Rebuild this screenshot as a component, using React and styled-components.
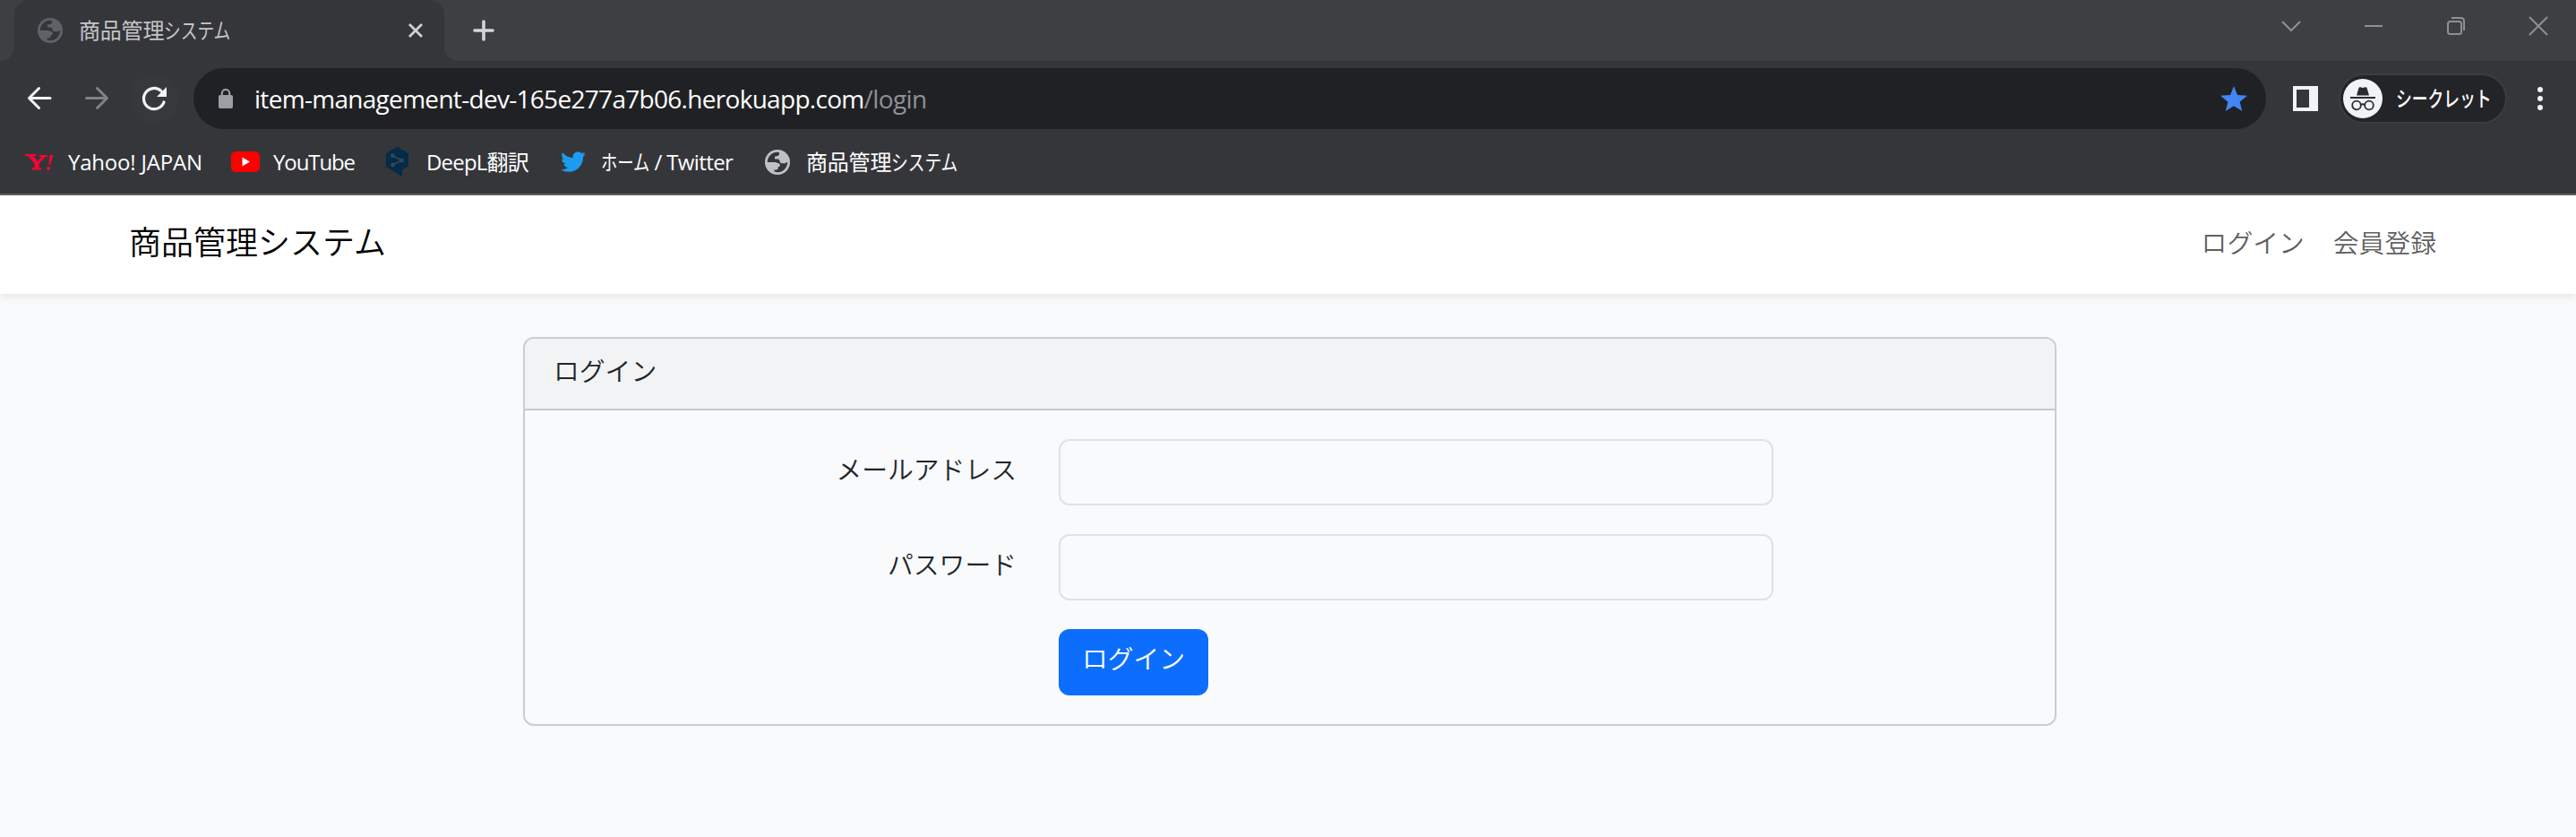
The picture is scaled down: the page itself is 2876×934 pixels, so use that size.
import React from "react";
import styled, { createGlobalStyle } from "styled-components";

const Global = createGlobalStyle`
  * { box-sizing: border-box; }
  body { margin: 0; background: #f8fafc; }
`;

const ui = `"Open Sans", "Noto Sans CJK JP", sans-serif`;
const jp = `"Noto Sans CJK JP", sans-serif`;

const Window = styled.div`
  display: flex;
  flex-direction: column;
  width: 100%;
  height: 934px;
  overflow: hidden;
  font-family: ${jp};
`;

const Text = styled.span`
  font-family: ${ui};
  font-size: ${(p) => p.$size || 24}px;
  font-weight: ${(p) => p.$weight || 400};
  letter-spacing: ${(p) => p.$track || 0}px;
  line-height: 32px;
  white-space: pre;
  color: ${(p) => p.$color || "#fff"};
`;

/* Condensed kana, as interface fonts draw it */
const Kana = styled.span`
  display: inline-block;
  letter-spacing: 0;
  transform: scaleX(${(p) => p.$scale || 0.78});
  transform-origin: 0 50%;
  margin-right: ${(p) => p.$pull}px;
`;

/* Tab strip */
const TabStrip = styled.div`
  display: flex;
  height: 68px;
  padding-left: 16px;
  background: #3c4043;
`;

const Tab = styled.div`
  position: relative;
  display: flex;
  align-items: center;
  width: 480px;
  padding: 0 24px 0 26px;
  border-radius: 16px 16px 0 0;
  background: #35363a;
  &::before, &::after {
    content: "";
    position: absolute;
    bottom: 0;
    width: 16px;
    height: 16px;
  }
  &::before {
    left: -16px;
    background: radial-gradient(circle at 0 0, transparent 15.5px, #35363a 16.5px);
  }
  &::after {
    right: -16px;
    background: radial-gradient(circle at 100% 0, transparent 15.5px, #35363a 16.5px);
  }
`;

const TabTitle = styled.div`
  display: flex;
  flex: 1;
  padding-left: 18px;
`;

const NewTab = styled.div`
  display: flex;
  align-items: center;
  margin-left: 32px;
`;

const WindowButtons = styled.div`
  display: flex;
  gap: 68px;
  margin-left: auto;
  padding: 17px 30px 0 0;
`;

/* Toolbar */
const Toolbar = styled.div`
  display: flex;
  align-items: center;
  height: 84px;
  padding: 0 27px 0 28px;
  background: #35363a;
`;

const NavIcons = styled.div`
  display: flex;
  align-items: center;
  gap: 32px;
  width: 188px;
`;

const ReloadButton = styled.div`
  display: flex;
  align-items: center;
  justify-content: center;
  width: 56px;
  height: 56px;
  margin-left: -12px;
  border-radius: 50%;
  background: #37383c;
`;

const AddressBar = styled.div`
  display: flex;
  align-items: center;
  flex: 1;
  height: 68px;
  padding: 0 20px 0 28px;
  border-radius: 34px;
  background: #202124;
`;

const Url = styled.div`
  flex: 1;
  padding: 0 0 1px 24px;
`;

const SidePanelIcon = styled.div`
  width: 28px;
  height: 28px;
  margin: 0 23px 0 30px;
  border: solid #f1f3f4;
  border-width: 4px 10px 4px 4px;
`;

const ProfilePill = styled.div`
  display: flex;
  align-items: center;
  width: 188px;
  height: 56px;
  padding-left: 3px;
  border: 2px solid #3c3d41;
  border-radius: 28px;
  background: #232427;
`;

const Avatar = styled.div`
  display: flex;
  flex: none;
  align-items: center;
  justify-content: center;
  width: 44px;
  height: 44px;
  margin-right: 15px;
  border-radius: 50%;
  background: #f1f3f4;
`;

const MenuDots = styled.div`
  display: flex;
  flex-direction: column;
  gap: 4px;
  margin-left: 34px;
  margin-right: 10px;
`;

const Dot = styled.i`
  width: 6px;
  height: 6px;
  border-radius: 50%;
  background: #f1f3f4;
`;

/* Bookmarks */
const BookmarkBar = styled.div`
  display: flex;
  height: 66px;
  padding: 0 28px;
  background: #35363a;
  border-bottom: 2px solid #5f6065;
`;

const Bookmark = styled.div`
  display: flex;
  align-items: center;
  width: ${(p) => p.$width}px;
  height: 57px;
`;

const BookmarkIcon = styled.div`
  display: flex;
  flex: none;
  width: ${(p) => p.$width}px;
`;

/* Page */
const Navbar = styled.nav`
  display: flex;
  justify-content: space-between;
  align-items: center;
  height: 110px;
  flex: none;
  padding: 0 156px 6px 144px;
  background: #fff;
  box-shadow: 0 4px 8px rgba(0, 0, 0, 0.075);
`;

const Brand = styled.div`
  padding-bottom: 4px;
  font-size: 36px;
  line-height: 54px;
  color: #000;
  font-weight: 350;
`;

const NavLinks = styled.div`
  display: flex;
  gap: 32px;
`;

const NavLink = styled.a`
  font-size: 28.8px;
  line-height: 46px;
  font-weight: 350;
  color: rgba(0, 0, 0, 0.65);
`;

const Main = styled.main`
  display: flex;
  justify-content: center;
  padding: 48px 0 0 4px;
`;

const Card = styled.section`
  width: 1712px;
  height: 434px;
  border: 2px solid #cbcccf;
  border-radius: 12px;
  overflow: hidden;
  color: #212529;
  font-size: 28.8px;
  font-weight: 350;
`;

const CardHeader = styled.header`
  height: 80px;
  padding: 12px 32px 0;
  line-height: 46px;
  background: #f1f3f4;
  border-bottom: 2px solid #c7c8cb;
`;

const Form = styled.div`
  display: grid;
  grid-template-columns: 549px 798px;
  column-gap: 47px;
  row-gap: 32px;
  padding-top: 32px;
`;

const Label = styled.label`
  padding-top: 10px;
  line-height: 46px;
  text-align: right;
`;

const Input = styled.input`
  height: 74px;
  padding: 12px 24px;
  border: 2px solid #dee2e6;
  border-radius: 12px;
  background: #f8fafc;
  outline: none;
`;

const Submit = styled.button`
  grid-column: 2;
  justify-self: start;
  width: 167px;
  height: 74px;
  padding: 0 0 10px;
  border: 0;
  border-radius: 12px;
  background: #0d6efd;
  color: #fff;
  font: 350 28.8px/46px ${jp};
`;

const Globe = ({ color, land }) => (
  <svg width="28" height="28" viewBox="0 0 28 28">
    <circle cx="14" cy="14" r="14" fill={color} />
    <path
      d="M2.800 14A11.200 11.200 0 0 1 14 2.800L16 3.200V5.600Q15.500 7 13.600 7.200H12Q11 7.400 11 8.800V10.400H14.400Q16 10.600 16.400 12.200L17 14Q17.500 15.200 19 15.200H22Q23.400 15.200 24 14H25.200A11.200 11.200 0 0 1 14 25.200L10.500 24.600V22.400H13Q14.400 22.200 14.600 20.800V19.600Q16.800 19.400 16.800 17.200Q16.600 15 13.600 14.800L11.800 14Z"
      fill={land}
    />
  </svg>
);

export default function App() {
  return (
    <Window>
      <Global />
      <TabStrip>
        <Tab>
          <Globe color="#5f6368" land="#35363a" />
          <TabTitle>
            <Text $color="#c4c6c9" $track={-0.2}>商品管理<Kana $pull={-21}>システム</Kana></Text>
          </TabTitle>
          <svg width="16" height="16" viewBox="0 0 16 16" stroke="#d0d2d4" strokeWidth="2.800">
            <path d="M1 1 15 15 M15 1 1 15" />
          </svg>
        </Tab>
        <NewTab>
          <svg width="24" height="24" viewBox="0 0 24 24" stroke="#d4d5d7" strokeWidth="3.6" strokeLinecap="round">
            <path d="M2 12H22 M12 2V22" />
          </svg>
        </NewTab>
        <WindowButtons>
          <svg width="24" height="24" viewBox="0 0 24 24" fill="none" stroke="#8e9093" strokeWidth="2"><path d="M2 7 12 17 22 7" /></svg>
          <svg width="24" height="24" viewBox="0 0 24 24" fill="none" stroke="#8e9093" strokeWidth="2"><path d="M2 12H22" /></svg>
          <svg width="24" height="24" viewBox="0 0 24 24" fill="none" stroke="#8e9093" strokeWidth="2">
            <rect x="3" y="7" width="15" height="14" rx="2.500" />
            <path d="M7 3H17.500Q21 3 21 7V17" />
          </svg>
          <svg width="24" height="24" viewBox="0 0 24 24" fill="none" stroke="#8e9093" strokeWidth="2"><path d="M2 2 22 22 M22 2 2 22" /></svg>
        </WindowButtons>
      </TabStrip>

      <Toolbar>
        <NavIcons>
          <svg width="32" height="32" viewBox="0 0 32 32" fill="none" stroke="#f1f3f4" strokeWidth="3" strokeLinecap="round" strokeLinejoin="round">
            <path d="M28 15.500H5 M15.500 4.500 4.500 15.500 15.500 26.500" />
          </svg>
          <svg width="32" height="32" viewBox="0 0 32 32" fill="none" stroke="#818286" strokeWidth="3" strokeLinecap="round" strokeLinejoin="round">
            <path d="M4.500 15.500H27.500 M16.500 4.500 27.500 15.500 16.500 26.500" />
          </svg>
          <ReloadButton>
            <svg width="32" height="32" viewBox="0 0 32 32">
              <path d="M27 20A11.600 11.600 0 1 1 24 7.600" fill="none" stroke="#f1f3f4" strokeWidth="3.2" strokeLinecap="round" />
              <path d="M30 3V14H19Z" fill="#f1f3f4" />
            </svg>
          </ReloadButton>
        </NavIcons>
        <AddressBar>
          <svg width="16" height="22" viewBox="0 0 16 22">
            <rect x="0" y="7" width="16" height="15" rx="2" fill="#9aa0a6" />
            <path d="M3.800 8V5.200A4.200 4.200 0 0 1 12.200 5.200V8" fill="none" stroke="#9aa0a6" strokeWidth="2.2" />
          </svg>
          <Url>
            <Text $size={28} $track={-0.7}>item-management-dev-165e277a7b06.herokuapp.com<Text as="span" $size={28} $track={-0.6} $color="#8f9195">/login</Text></Text>
          </Url>
          <svg width="32" height="30" viewBox="0 0 32 30">
            <path d="M16 1 20 11 31 11.700 22.600 18.700 25.300 29 16 23.300 6.700 29 9.400 18.700 1 11.700 12 11Z" fill="#4285f4" />
          </svg>
        </AddressBar>
        <SidePanelIcon />
        <ProfilePill>
          <Avatar>
            <svg width="28" height="28" viewBox="0 0 28 28">
              <path d="M7 10.500 9.500 2Q10 1 11.200 1.300L14 2 16.800 1.300Q18 1 18.500 2L21 10.500Z" fill="#2b2c30" />
              <path d="M0 13H28" stroke="#2b2c30" strokeWidth="2" />
              <g fill="none" stroke="#2b2c30" strokeWidth="1.800">
                <circle cx="7" cy="21.500" r="4.800" />
                <circle cx="21" cy="21.500" r="4.800" />
                <path d="M11.800 21Q14 19.500 16.200 21" />
              </g>
            </svg>
          </Avatar>
          <Text $weight={500}><Kana $scale={0.74} $pull={-37}>シークレット</Kana></Text>
        </ProfilePill>
        <MenuDots><Dot /><Dot /><Dot /></MenuDots>
      </Toolbar>

      <BookmarkBar>
        <Bookmark $width={230}>
          <BookmarkIcon $width={48}>
            <svg width="32" height="18" viewBox="0 0 32 18" fill="#ff0033">
              <path d="M0 0H12V2H9.500L14 8 18.500 3H16V1H25V3H22.500L15.500 10.500V15.500H18V17.500H8V15.500H10.500V10.500L3.500 2H0Z" />
              <path d="M27.500 1H31.500L28 12H26.500Z" />
              <circle cx="26" cy="16" r="2" />
            </svg>
          </BookmarkIcon>
          <Text $track={-0.2}>Yahoo! JAPAN</Text>
        </Bookmark>
        <Bookmark $width={173}>
          <BookmarkIcon $width={47}>
            <svg width="32" height="23" viewBox="0 0 32 23">
              <rect width="32" height="23" rx="5.500" fill="#f00" />
              <path d="M12.500 6.500V16.500L21 11.500Z" fill="#fff" />
            </svg>
          </BookmarkIcon>
          <Text $track={-1.1}>YouTube</Text>
        </Bookmark>
        <Bookmark $width={195}>
          <BookmarkIcon $width={45}>
            <svg width="25" height="33" viewBox="0 0 25 33">
              <path d="M12.500 0 25 7V21L18 25.500V33L0 22V7Z" fill="#042b48" />
              <g fill="#3a4654" stroke="#3a4654" strokeWidth="1.600">
                <path d="M7.500 9.700 17.500 15 7.500 20" fill="none" />
                <circle cx="7.500" cy="9.700" r="1.600" />
                <circle cx="17.500" cy="15" r="1.600" />
                <circle cx="7.500" cy="20" r="1.600" />
              </g>
            </svg>
          </BookmarkIcon>
          <Text $track={-0.8}>DeepL翻訳</Text>
        </Bookmark>
        <Bookmark $width={228}>
          <BookmarkIcon $width={45}>
            <svg width="28" height="23" viewBox="0 2 24 20">
              <path d="M23.953 4.570a10 10 0 0 1-2.825.775 4.958 4.958 0 0 0 2.163-2.723c-.951.555-2.005.959-3.127 1.184a4.920 4.920 0 0 0-8.384 4.482C7.690 8.095 4.067 6.130 1.640 3.162a4.822 4.822 0 0 0-.666 2.475c0 1.710.870 3.213 2.188 4.096a4.904 4.904 0 0 1-2.228-.616v.060a4.923 4.923 0 0 0 3.946 4.827 4.996 4.996 0 0 1-2.212.085 4.936 4.936 0 0 0 4.604 3.417 9.867 9.867 0 0 1-6.102 2.105c-.390 0-.779-.023-1.170-.067a13.995 13.995 0 0 0 7.557 2.209c9.053 0 13.998-7.496 13.998-13.985 0-.210 0-.420-.015-.630A9.935 9.935 0 0 0 24 4.590z" fill="#1d9bf0" />
            </svg>
          </BookmarkIcon>
          <Text $track={-0.6}><Kana $scale={0.76} $pull={-17.5}>ホーム</Kana> / Twitter</Text>
        </Bookmark>
        <Bookmark $width={220}>
          <BookmarkIcon $width={46}>
            <Globe color="#bdc1c6" land="#35363a" />
          </BookmarkIcon>
          <Text $track={-0.2}>商品管理<Kana $pull={-21}>システム</Kana></Text>
        </Bookmark>
      </BookmarkBar>

      <Navbar>
        <Brand>商品管理システム</Brand>
        <NavLinks>
          <NavLink>ログイン</NavLink>
          <NavLink>会員登録</NavLink>
        </NavLinks>
      </Navbar>
      <Main>
        <Card>
          <CardHeader>ログイン</CardHeader>
          <Form>
            <Label htmlFor="email">メールアドレス</Label>
            <Input id="email" type="email" />
            <Label htmlFor="password">パスワード</Label>
            <Input id="password" type="password" />
            <Submit>ログイン</Submit>
          </Form>
        </Card>
      </Main>
    </Window>
  );
}
